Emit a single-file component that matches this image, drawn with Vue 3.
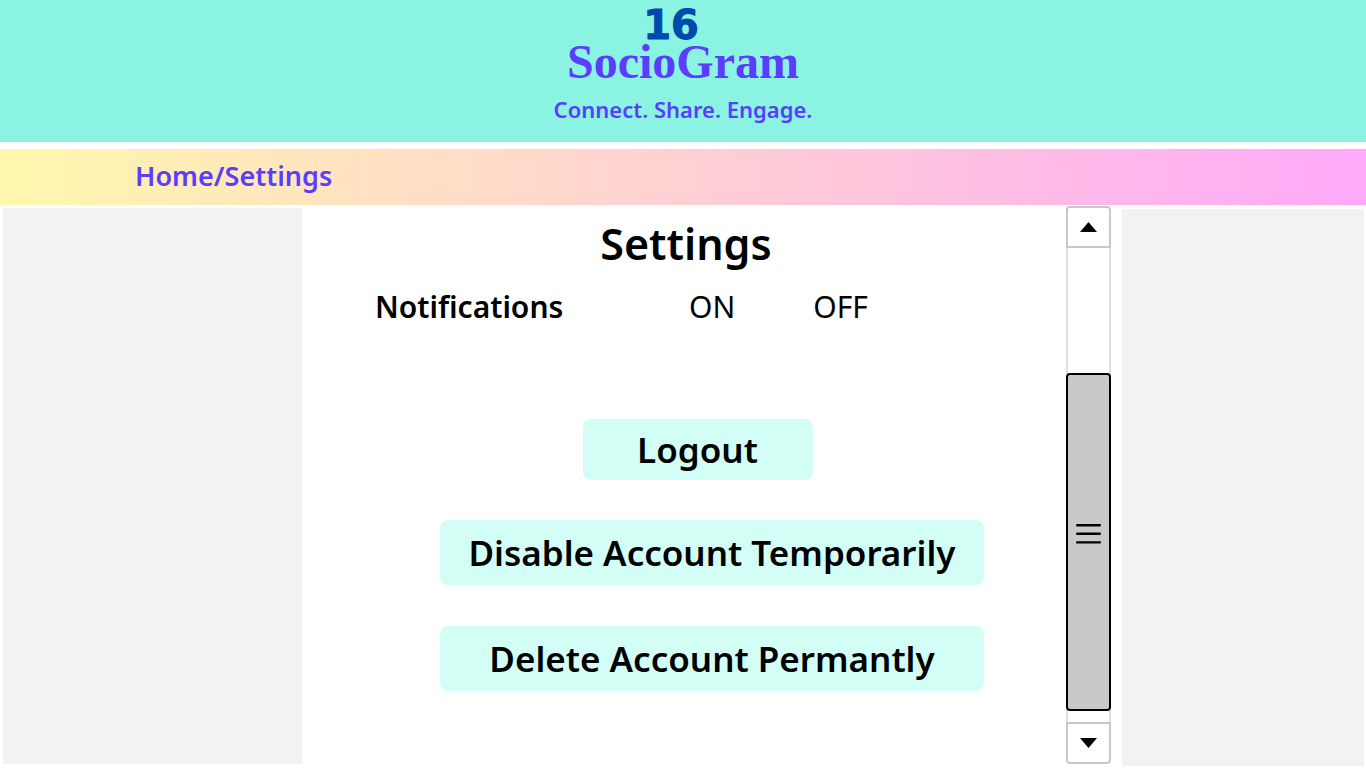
<script setup>
import { ref } from 'vue'

const notifications = ref(null)
const accountActions = ['Disable Account Temporarily', 'Delete Account Permantly']
</script>

<template>
  <div class="page">
    <header class="banner">
      <span class="count">16</span>
      <h1 class="brand">SocioGram</h1>
      <p class="tagline">Connect. Share. Engage.</p>
    </header>

    <nav class="crumbs" aria-label="Breadcrumb">
      <a href="#">Home/Settings</a>
    </nav>

    <div class="body">
      <aside class="side side-left"></aside>

      <main class="content">
        <h2 class="title">Settings</h2>
        <div class="row" role="group" aria-labelledby="notif">
          <span id="notif" class="label">Notifications</span>
          <button type="button" class="toggle" :aria-pressed="notifications === true" @click="notifications = true">ON</button>
          <button type="button" class="toggle" :aria-pressed="notifications === false" @click="notifications = false">OFF</button>
        </div>
        <div class="session">
          <button type="button" class="action logout">Logout</button>
        </div>
        <div class="account">
          <button v-for="name in accountActions" :key="name" type="button" class="action">{{ name }}</button>
        </div>
      </main>

      <div class="scroller">
        <button type="button" class="arrow arrow-up" aria-label="Scroll up">
          <svg width="17" height="10" viewBox="0 0 17 10"><path d="M8.500 0 17 10H0z" /></svg>
        </button>
        <div class="track">
          <div class="thumb">
            <svg width="25" height="22" viewBox="0 0 25 22">
              <path d="M1.200 2.200H23.800M1.200 10.800H23.800M1.200 19.400H23.800" stroke="#000" stroke-width="2.400" stroke-linecap="round" />
            </svg>
          </div>
        </div>
        <button type="button" class="arrow arrow-down" aria-label="Scroll down">
          <svg width="17" height="10" viewBox="0 0 17 10"><path d="M8.500 10 17 0H0z" /></svg>
        </button>
      </div>

      <aside class="side side-right"></aside>
    </div>
  </div>
</template>

<style>
body {
  margin: 0;
  background: #fff;
}
</style>

<style scoped>
.page {
  box-sizing: border-box;
  min-height: 100vh;
  display: flex;
  flex-direction: column;
  font-family: "Noto Sans", "Open Sans", sans-serif;
  color: #000;
}

button {
  font: inherit;
  color: inherit;
  border: 0;
  padding: 0;
  background: none;
  cursor: pointer;
}

.banner {
  box-sizing: border-box;
  height: 142px;
  padding-top: 8px;
  display: flex;
  flex-direction: column;
  align-items: center;
  background: #8af3e2;
  color: #5a3dff;
}

.count {
  margin-right: 24px;
  font: 700 40px/34px "DejaVu Sans", sans-serif;
  color: #004aad;
  -webkit-text-stroke: 1px #004aad;
}

.brand {
  margin: 0;
  font: 700 48px/40px "Liberation Serif", serif;
}

.tagline {
  margin: 11px 0 0;
  font-size: 22px;
  line-height: 32px;
  font-weight: 600;
}

.crumbs {
  box-sizing: border-box;
  height: 56px;
  margin-top: 7px;
  padding: 7px 0 9px 135px;
  background: linear-gradient(90deg, #fff7ad, #ffa9f9);
}

.crumbs a {
  display: inline-block;
  font-size: 27px;
  line-height: 40px;
  font-weight: 600;
  color: #5a3dff;
  text-decoration: none;
}

.body {
  flex: 1;
  display: grid;
  grid-template-columns: 299fr 764fr 45px 253fr;
  padding: 0 2px 0 3px;
}

.side {
  background: #f2f2f2;
}

.side-left {
  margin: 3px 0 4px;
}

.side-right {
  margin: 4px 0 2px 11px;
}

.content {
  display: flex;
  flex-direction: column;
}

.title {
  margin: 9px 0 0;
  padding-left: 4px;
  text-align: center;
  font-size: 43px;
  line-height: 60px;
  font-weight: 600;
}

.row {
  display: flex;
  align-items: center;
  margin-top: 13px;
  padding-left: 73px;
  font-size: 30px;
  line-height: 40px;
}

.label {
  font-weight: 600;
  width: 314px;
}

.toggle + .toggle {
  margin-left: 78px;
}

.session {
  display: flex;
  justify-content: center;
  margin-top: 92px;
  padding-left: 27px;
}

.action {
  height: 65px;
  border-radius: 8px;
  background: #d3fef5;
  font-size: 35px;
  line-height: 48px;
  font-weight: 600;
}

.logout {
  width: 230px;
  height: 61px;
}

.account {
  display: grid;
  gap: 41px;
  margin-top: 40px;
  padding: 0 82px 0 138px;
}

.scroller {
  display: flex;
  flex-direction: column;
  margin: 1px 0 4px;
}

.arrow {
  box-sizing: border-box;
  height: 42px;
  display: flex;
  align-items: center;
  justify-content: center;
  border: 2px solid #c8c8c8;
}

.arrow-up {
  border-radius: 4px 4px 0 0;
}

.arrow-down {
  border-radius: 0 0 4px 4px;
}

.track {
  flex: 1;
  display: flex;
  flex-direction: column;
  padding: 125px 0 11px;
  background: linear-gradient(90deg, #dedede 2px, #fff 2px, #fff 43px, #dedede 43px);
}

.thumb {
  flex: 1;
  display: flex;
  align-items: center;
  justify-content: center;
  padding-bottom: 16px;
  border: 2px solid #000;
  border-radius: 4px;
  background: #c9c9c7;
}
</style>
